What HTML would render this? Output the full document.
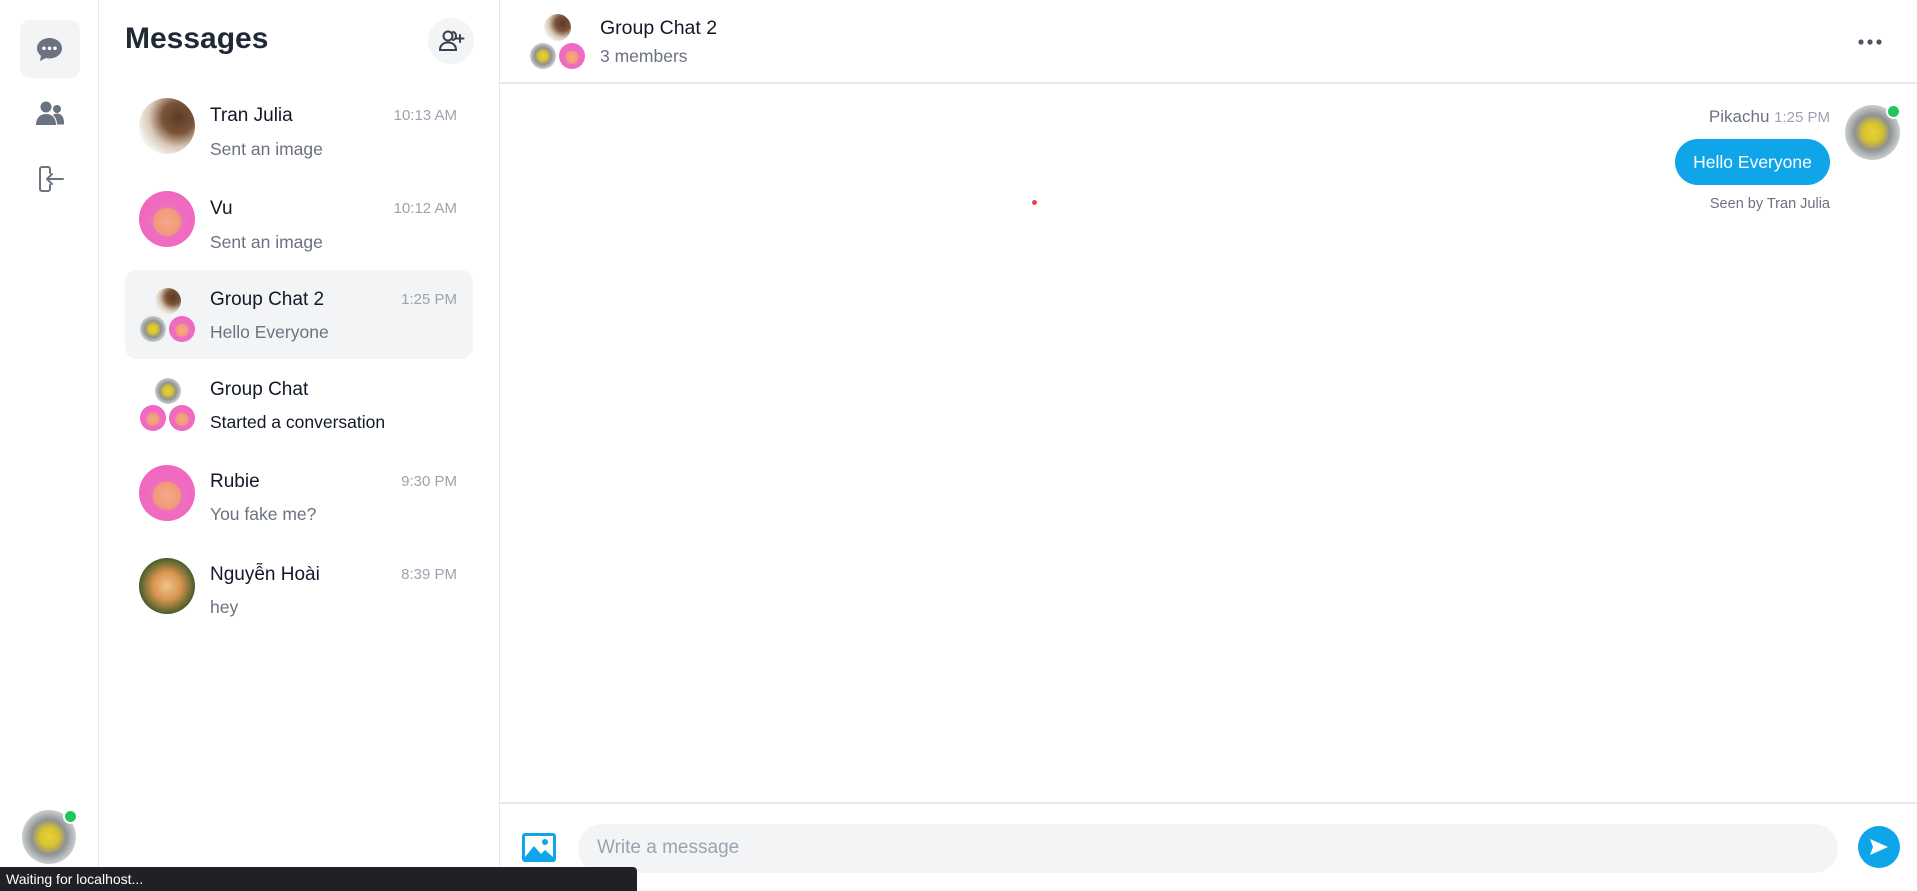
<!DOCTYPE html>
<html><head><meta charset="utf-8"><style>
*{box-sizing:border-box;margin:0;padding:0}
body{width:1917px;height:891px;overflow:hidden;background:#fff;font-family:"Liberation Sans",sans-serif;position:relative;color:#111827}
.abs{position:absolute}
.rail{left:0;top:0;width:99px;height:891px;border-right:1px solid #e5e7eb}
.list{left:99px;top:0;width:401px;height:891px;border-right:1px solid #e5e7eb}
.av{position:absolute;border-radius:50%;overflow:hidden}
.girl{background:radial-gradient(circle at 70% 35%,#5a3a26 0,#7b553a 30%,#d9c9b8 55%,#f3f1ee 75%)}
.pink{background:radial-gradient(circle at 50% 55%,#f6a98a 0,#f19878 32%,#ee6fc0 36%,#f35fbf 100%)}
.pika{background:radial-gradient(circle at 50% 50%,#e8d23a 0,#d7c12e 25%,#8f9291 45%,#c9cdd0 70%,#5f6468 100%)}
.dog{background:radial-gradient(circle at 50% 50%,#f0c48a 0,#d9954f 35%,#4a5e2a 70%,#2f3f1a 100%)}
.name{position:absolute;font-size:19px;color:#111827}
.sub{position:absolute;font-size:17.5px;color:#6b7280}
.time{position:absolute;font-size:15px;color:#9ca3af;text-align:right;right:42px}
</style></head><body>
<div class="abs rail">
  <div class="abs" style="left:20px;top:20px;width:60px;height:58px;background:#f3f4f6;border-radius:10px"></div>
  <svg class="abs" style="left:36px;top:37px" width="27" height="25" viewBox="0 0 27 25"><path d="M13.5 1C6.6 1 1 5.6 1 11.3c0 3 1.5 5.6 4 7.4L4 24l6-3c1.1.3 2.3.5 3.5.5C20.4 21.5 26 16.9 26 11.3S20.4 1 13.5 1z" fill="#6b7280"/><circle cx="8" cy="11.3" r="1.8" fill="#fff"/><circle cx="13.5" cy="11.3" r="1.8" fill="#fff"/><circle cx="19" cy="11.3" r="1.8" fill="#fff"/></svg>
  <svg class="abs" style="left:36px;top:101px" width="28" height="26" viewBox="0 0 28 26"><circle cx="10" cy="6" r="5.5" fill="#6b7280"/><circle cx="21" cy="8" r="4" fill="#6b7280"/><path d="M0 24c0-7 4-11 10-11s10 4 10 11z" fill="#6b7280"/><path d="M17 14c1-1 2.5-1.5 4-1.5 4 0 7 3 7 9v2h-7c0-4-1.3-7-4-9.5z" fill="#6b7280"/></svg>
  <svg class="abs" style="left:38px;top:166px" width="26" height="26" viewBox="0 0 26 26" fill="none" stroke="#6b7280" stroke-width="2" stroke-linecap="round" stroke-linejoin="round"><path d="M12 7V3a2 2 0 0 0-2-2H4a2 2 0 0 0-2 2v20a2 2 0 0 0 2 2h6a2 2 0 0 0 2-2v-4"/><path d="M25 13H9M14 8l-5 5 5 5"/></svg>
  <div class="av pika" style="left:22px;top:810px;width:54px;height:54px"></div>
  <div class="abs" style="left:63px;top:809px;width:15px;height:15px;border-radius:50%;background:#22c55e;border:2px solid #fff"></div>
</div>
<div class="abs list">
  <div class="abs" style="left:26px;top:22px;font-size:30px;font-weight:bold;color:#1f2937">Messages</div>
  <div class="abs" style="left:329px;top:18px;width:46px;height:46px;border-radius:50%;background:#f3f4f6"></div>
  <svg class="abs" style="left:340px;top:30px" width="26" height="22" viewBox="0 0 26 22" fill="none" stroke="#374151" stroke-width="2" stroke-linecap="round"><circle cx="9" cy="6" r="4.5"/><path d="M1 20c0-5 3.5-7.5 8-7.5s8 2.5 8 7.5z"/><path d="M14 2c2 .5 3 2 3 4s-1 3.5-3 4M21 5v7M17.5 8.5h7"/></svg>
  <div class="abs" style="left:26px;top:270px;width:348px;height:89px;background:#f3f4f6;border-radius:12px"></div>

  <div class="av girl" style="left:40px;top:98px;width:56px;height:56px"></div>
  <div class="name" style="left:111px;top:105px">Tran Julia</div><div class="time" style="top:107px">10:13 AM</div>
  <div class="sub" style="left:111px;top:139px">Sent an image</div>

  <div class="av pink" style="left:40px;top:191px;width:56px;height:56px"></div>
  <div class="name" style="left:111px;top:198px">Vu</div><div class="time" style="top:200px">10:12 AM</div>
  <div class="sub" style="left:111px;top:232px">Sent an image</div>

  <div class="av girl" style="left:56px;top:288px;width:26px;height:26px"></div>
  <div class="av pika" style="left:41px;top:316px;width:26px;height:26px"></div>
  <div class="av pink" style="left:70px;top:316px;width:26px;height:26px"></div>
  <div class="name" style="left:111px;top:289px">Group Chat 2</div><div class="time" style="top:291px">1:25 PM</div>
  <div class="sub" style="left:111px;top:322px">Hello Everyone</div>

  <div class="av pika" style="left:56px;top:378px;width:26px;height:26px"></div>
  <div class="av pink" style="left:41px;top:405px;width:26px;height:26px"></div>
  <div class="av pink" style="left:70px;top:405px;width:26px;height:26px"></div>
  <div class="name" style="left:111px;top:379px">Group Chat</div>
  <div class="sub" style="left:111px;top:412px;color:#111827">Started a conversation</div>

  <div class="av pink" style="left:40px;top:465px;width:56px;height:56px"></div>
  <div class="name" style="left:111px;top:471px">Rubie</div><div class="time" style="top:473px">9:30 PM</div>
  <div class="sub" style="left:111px;top:504px">You fake me?</div>

  <div class="av dog" style="left:40px;top:558px;width:56px;height:56px"></div>
  <div class="name" style="left:111px;top:564px">Nguyễn Hoài</div><div class="time" style="top:566px">8:39 PM</div>
  <div class="sub" style="left:111px;top:597px">hey</div>
</div>

<div class="abs" style="left:500px;top:0;width:1417px;height:84px;border-bottom:2px solid #e5e7eb"></div>
<div class="av girl" style="left:544px;top:14px;width:27px;height:27px"></div>
<div class="av pika" style="left:530px;top:43px;width:26px;height:26px"></div>
<div class="av pink" style="left:559px;top:43px;width:26px;height:26px"></div>
<div class="abs" style="left:600px;top:17px;font-size:19.5px;color:#111827">Group Chat 2</div>
<div class="abs" style="left:600px;top:46px;font-size:17.5px;color:#6b7280">3 members</div>
<svg class="abs" style="left:1857px;top:38px" width="26" height="8"><circle cx="4" cy="4" r="2.6" fill="#4b5563"/><circle cx="13" cy="4" r="2.6" fill="#4b5563"/><circle cx="22" cy="4" r="2.6" fill="#4b5563"/></svg>

<div class="abs" style="right:87px;top:107px;font-size:17px;color:#6b7280">Pikachu <span style="font-size:15px;color:#9ca3af">1:25 PM</span></div>
<div class="av pika" style="left:1845px;top:105px;width:55px;height:55px"></div>
<div class="abs" style="left:1886px;top:104px;width:15px;height:15px;border-radius:50%;background:#22c55e;border:2px solid #fff"></div>
<div class="abs" style="left:1675px;top:139px;width:155px;height:46px;border-radius:23px;background:#0ea5e9;color:#fff;font-size:17.5px;line-height:46px;text-align:center">Hello Everyone</div>
<div class="abs" style="right:87px;top:196px;font-size:14.5px;color:#6b7280">Seen by Tran Julia</div>
<div class="abs" style="left:1032px;top:200px;width:5px;height:5px;border-radius:50%;background:#ef4444"></div>

<div class="abs" style="left:500px;top:802px;width:1417px;height:2px;background:#e5e7eb"></div>
<svg class="abs" style="left:522px;top:833px" width="34" height="29" viewBox="0 0 34 29"><rect x="0" y="0" width="34" height="29" rx="3" fill="#0ea5e9"/><rect x="3" y="3" width="28" height="21" fill="#fff"/><circle cx="23" cy="9" r="3" fill="#0ea5e9"/><path d="M3 24l9-11 7 8 4-4 8 7z" fill="#0ea5e9"/></svg>
<div class="abs" style="left:578px;top:824px;width:1260px;height:49px;border-radius:25px;background:#f3f4f6"></div>
<div class="abs" style="left:597px;top:837px;font-size:19px;color:#9ca3af">Write a message</div>
<div class="abs" style="left:1858px;top:826px;width:42px;height:42px;border-radius:50%;background:#0ea5e9"></div>
<svg class="abs" style="left:1869px;top:838px" width="20" height="18" viewBox="0 0 20 18"><path d="M1 1l18 8-18 8 3-8z" fill="#fff"/></svg>

<div class="abs" style="left:0;top:867px;width:637px;height:24px;background:#202124;color:#fff;font-size:14px;line-height:24px;padding-left:6px;border-top-right-radius:4px">Waiting for localhost...</div>
</body></html>
